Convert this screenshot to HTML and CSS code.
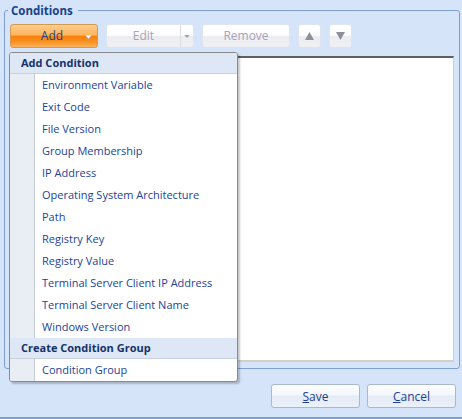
FILE: index.html
```html
<!DOCTYPE html>
<html>
<head>
<meta charset="utf-8">
<link rel="stylesheet" href="styles.css">
</head>
<body>
<div class="window">
  <fieldset class="group">
    <legend class="group-title">Conditions</legend>
    <div class="toolbar">
      <div class="btn btn-add">
        <span class="btn-label">Add</span>
        <svg class="drop" width="7" height="4" viewBox="0 0 7 4"><polygon points="0,0 7,0 3.5,4" fill="#ffffff" stroke="#9aa9c8" stroke-width="0.6"/></svg>
      </div>
      <div class="btn btn-dis btn-split">
        <span class="btn-label split-main">Edit</span>
        <span class="split-arrow"><svg width="6" height="3" viewBox="0 0 6 3"><polygon points="0,0 6,0 3,3" fill="#a8a8b0"/></svg></span>
      </div>
      <div class="btn btn-dis btn-wide"><span class="btn-label">Remove</span></div>
      <div class="btn btn-dis btn-sq"><svg width="9" height="8" viewBox="0 0 9 8"><polygon points="4.5,0 9,8 0,8" fill="#8f8f99"/></svg></div>
      <div class="btn btn-dis btn-sq"><svg width="9" height="8" viewBox="0 0 9 8"><polygon points="0,0 9,0 4.5,8" fill="#8f8f99"/></svg></div>
    </div>
    <div class="list"></div>
  </fieldset>
  <div class="footer">
    <div class="btn btn-dlg"><span><u>S</u>ave</span></div>
    <div class="btn btn-dlg"><span><u>C</u>ancel</span></div>
  </div>

  <div class="menu">
    <div class="menu-head">Add Condition</div>
    <div class="menu-item"><span class="gutter"></span><span class="mi-text">Environment Variable</span></div>
    <div class="menu-item"><span class="gutter"></span><span class="mi-text">Exit Code</span></div>
    <div class="menu-item"><span class="gutter"></span><span class="mi-text">File Version</span></div>
    <div class="menu-item"><span class="gutter"></span><span class="mi-text">Group Membership</span></div>
    <div class="menu-item"><span class="gutter"></span><span class="mi-text">IP Address</span></div>
    <div class="menu-item"><span class="gutter"></span><span class="mi-text">Operating System Architecture</span></div>
    <div class="menu-item"><span class="gutter"></span><span class="mi-text">Path</span></div>
    <div class="menu-item"><span class="gutter"></span><span class="mi-text">Registry Key</span></div>
    <div class="menu-item"><span class="gutter"></span><span class="mi-text">Registry Value</span></div>
    <div class="menu-item"><span class="gutter"></span><span class="mi-text">Terminal Server Client IP Address</span></div>
    <div class="menu-item"><span class="gutter"></span><span class="mi-text">Terminal Server Client Name</span></div>
    <div class="menu-item"><span class="gutter"></span><span class="mi-text">Windows Version</span></div>
    <div class="menu-head">Create Condition Group</div>
    <div class="menu-item"><span class="gutter"></span><span class="mi-text">Condition Group</span></div>
  </div>
</div>
</body>
</html>
```

FILE: styles.css
```css
* { box-sizing: border-box; }
html, body { margin: 0; padding: 0; }
body {
  font-family: "Open Sans", "Noto Sans", "DejaVu Sans", sans-serif;
  font-size: 11px;
  background: #d6e5fb;
}
.window {
  position: relative;
  width: 462px;
  height: 419px;
  background: #d6e4fa;
  border-bottom: 2px solid #7c9fd6;
  overflow: hidden;
}
.group {
  margin: 3px 2px 0 4px;
  padding: 6px 5px 6px 5px;
  border: 1px solid #7f9fd4;
  border-radius: 3px;
  min-width: 0;
}
.group-title {
  padding: 0 5px 0 3px;
  margin-left: -2px;
  font-weight: bold;
  font-size: 11.5px;
  line-height: 15px;
  color: #15428b;
}
.toolbar {
  display: flex;
  gap: 8px;
  height: 24px;
}
.btn {
  height: 24px;
  border-radius: 3px;
  display: flex;
  align-items: center;
  justify-content: center;
  position: relative;
}
.btn-label { line-height: 22px; }
.btn-add {
  width: 88px;
  border: 1px solid #d59a52;
  background: linear-gradient(#fdcc8c 0%, #fcb65e 45%, #f7800e 52%, #f9901f 75%, #fcb259 100%);
  color: #1d3f8f;
  font-size: 12px;
}
.btn-add .btn-label { margin-left: -4px; }
.btn-add .drop { position: absolute; right: 5px; top: 10px; }
.btn-dis {
  border: 1px solid #dfe5ee;
  background: linear-gradient(#ffffff 0%, #fcfcfe 48%, #ececf1 52%, #eff0f4 100%);
  color: #a8a2b6;
  font-size: 12px;
}
.btn-split { width: 88px; justify-content: flex-start; }
.split-main {
  flex: 1;
  text-align: center;
  border-right: 1px solid #dadde4;
  height: 22px;
}
.split-arrow {
  width: 12px;
  display: flex;
  align-items: center;
  justify-content: center;
  padding-top: 1px;
}
.btn-wide { width: 88px; }
.btn-sq { width: 23px; }
.list {
  margin-top: 8px;
  height: 306px;
  background: #ffffff;
  border-top: 2px solid #5f5f5f;
  border-left: 2px solid #6a6a6a;
  border-right: 1px solid #d4d0c8;
  border-bottom: 2px solid #d4d0c8;
}
.footer {
  display: flex;
  justify-content: flex-end;
  gap: 7px;
  padding: 15px 6px 0 0;
}
.btn-dlg {
  width: 89px;
  border: 1px solid #a9b8ce;
  background: linear-gradient(#fdfeff 0%, #f3f6fb 45%, #e4ebf6 52%, #ebf1fa 100%);
  color: #1d3f8f;
  font-size: 12px;
}
.menu {
  position: absolute;
  left: 9px;
  top: 52px;
  width: 229px;
  border: 1px solid #8a8a8a;
  border-radius: 3px;
  background: #ffffff;
  box-shadow: 2px 2px 2px rgba(0, 0, 0, 0.22);
  overflow: hidden;
}
.menu-head {
  height: 21px;
  line-height: 20px;
  padding-left: 11px;
  background: #dde7f5;
  border-bottom: 1px solid #c8d0dc;
  color: #15316b;
  font-weight: bold;
  font-size: 11px;
}
.menu-item {
  display: flex;
  height: 22px;
  align-items: stretch;
}
.gutter {
  width: 25px;
  flex: none;
  background: #e9eef5;
  border-right: 1px solid #c5cad3;
}
.mi-text {
  padding-left: 7px;
  line-height: 21px;
  color: #22449a;
  white-space: nowrap;
}
```
